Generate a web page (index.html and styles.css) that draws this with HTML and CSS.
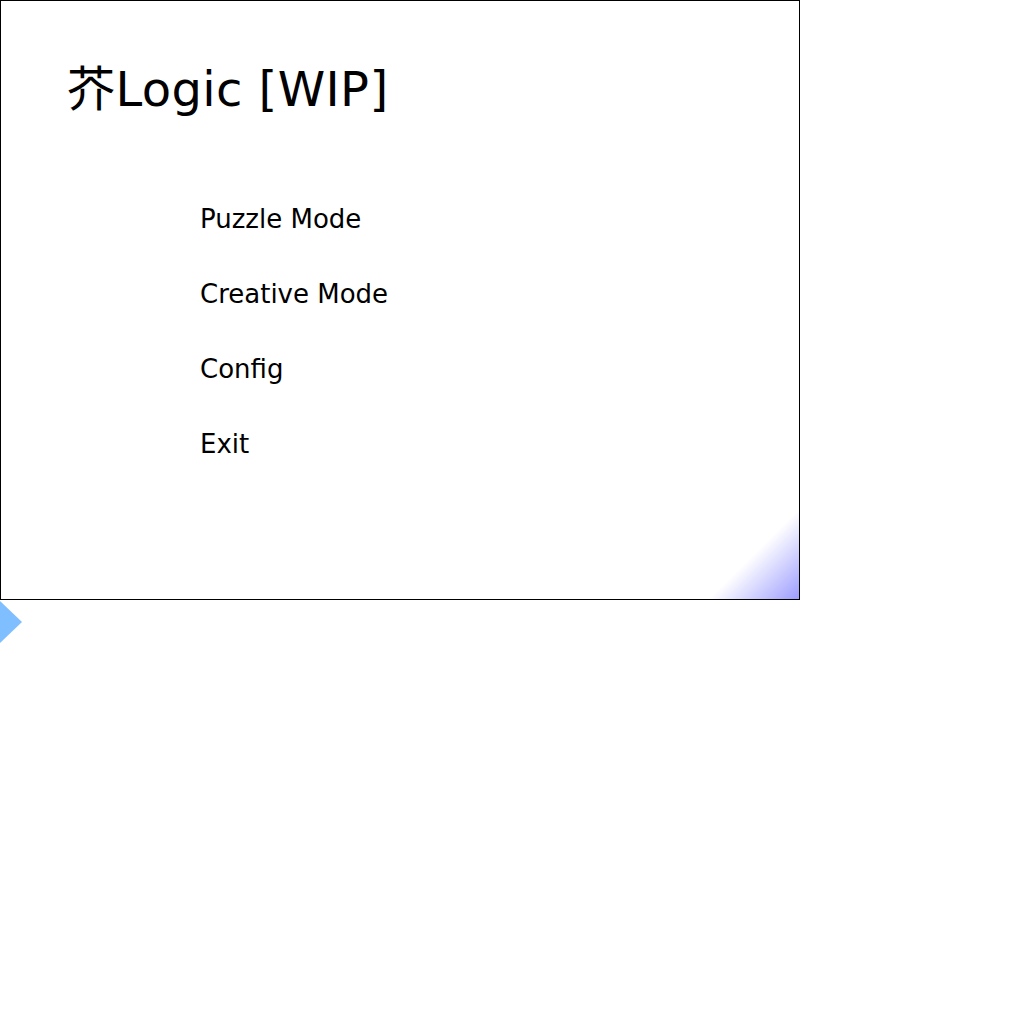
FILE: index.html
```html
<!DOCTYPE html>
<html>
<head>
<meta charset="utf-8">
<link rel="stylesheet" href="styles.css">
</head>
<body>
<div class="screen">
  <h1 class="title">芥Logic [WIP]</h1>
  <ul class="menu">
    <li>Puzzle Mode</li>
    <li>Creative Mode</li>
    <li>Config</li>
    <li>Exit</li>
  </ul>
  <div class="corner"></div>
</div>
<div class="cursor"></div>
</body>
</html>
```
FILE: styles.css
```css
html, body {
  margin: 0;
  padding: 0;
  background: #fff;
}
body {
  font-family: "DejaVu Sans", "Noto Sans CJK JP", sans-serif;
  color: #000;
}
.screen {
  position: relative;
  width: 798px;
  height: 598px;
  border: 1px solid #000;
  overflow: hidden;
}
.title {
  margin: 0;
  padding: 60px 0 0 66px;
  font-size: 48px;
  font-weight: normal;
  line-height: 56px;
  letter-spacing: 0.4px;
}
.menu {
  list-style: none;
  margin: 0;
  padding: 0 0 0 199px;
  display: flex;
  flex-direction: column;
  gap: 40px;
  margin-top: 85px;
}
.menu li {
  font-size: 26px;
  line-height: 35px;
}
.corner {
  position: absolute;
  right: 0;
  bottom: 0;
  width: 90px;
  height: 90px;
  background: linear-gradient(to bottom right, rgba(150,150,255,0) 50%, #9c9cff 100%);
}
.cursor {
  width: 0;
  height: 0;
  margin-top: 1px;
  border-top: 21px solid transparent;
  border-bottom: 21px solid transparent;
  border-left: 22px solid #80bfff;
}
```
